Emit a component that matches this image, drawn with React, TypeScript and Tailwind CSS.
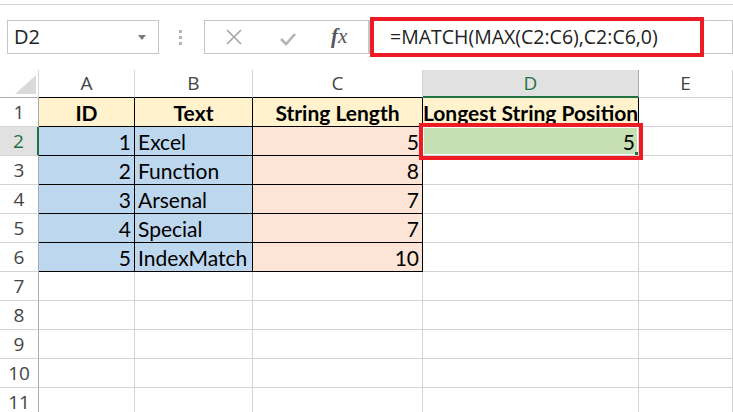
import React from 'react';

type Cell = {
    text?: string;
    align?: 'left' | 'right' | 'center';
    bold?: boolean;
    bg?: string;
    r?: 'black' | 'gray';
    b?: 'black' | 'gray';
};

const COLS = ['A', 'B', 'C', 'D', 'E'];

// rows 1..6 carry the table, the rest are empty sheet rows
const tableRows: Cell[][] = [
    [
        { text: 'ID', align: 'center', bold: true, bg: 'bg-[#fff2cc]', r: 'black', b: 'black' },
        { text: 'Text', align: 'center', bold: true, bg: 'bg-[#fff2cc]', r: 'black', b: 'black' },
        { text: 'String Length', align: 'center', bold: true, bg: 'bg-[#fff2cc]', r: 'black', b: 'black' },
        { text: 'Longest String Position', align: 'center', bold: true, bg: 'bg-[#fff2cc]', r: 'black', b: 'black' },
        {},
    ],
    [
        { text: '1', align: 'right', bg: 'bg-[#bdd7ee]', r: 'black', b: 'black' },
        { text: 'Excel', align: 'left', bg: 'bg-[#bdd7ee]', r: 'black', b: 'black' },
        { text: '5', align: 'right', bg: 'bg-[#fce4d6]', r: 'black', b: 'black' },
        { text: '5', align: 'right', bg: 'bg-[#c6e0b4]' },
        {},
    ],
    [
        { text: '2', align: 'right', bg: 'bg-[#bdd7ee]', r: 'black', b: 'black' },
        { text: 'Function', align: 'left', bg: 'bg-[#bdd7ee]', r: 'black', b: 'black' },
        { text: '8', align: 'right', bg: 'bg-[#fce4d6]', r: 'black', b: 'black' },
        {},
        {},
    ],
    [
        { text: '3', align: 'right', bg: 'bg-[#bdd7ee]', r: 'black', b: 'black' },
        { text: 'Arsenal', align: 'left', bg: 'bg-[#bdd7ee]', r: 'black', b: 'black' },
        { text: '7', align: 'right', bg: 'bg-[#fce4d6]', r: 'black', b: 'black' },
        {},
        {},
    ],
    [
        { text: '4', align: 'right', bg: 'bg-[#bdd7ee]', r: 'black', b: 'black' },
        { text: 'Special', align: 'left', bg: 'bg-[#bdd7ee]', r: 'black', b: 'black' },
        { text: '7', align: 'right', bg: 'bg-[#fce4d6]', r: 'black', b: 'black' },
        {},
        {},
    ],
    [
        { text: '5', align: 'right', bg: 'bg-[#bdd7ee]', r: 'black', b: 'black' },
        { text: 'IndexMatch', align: 'left', bg: 'bg-[#bdd7ee]', r: 'black', b: 'black' },
        { text: '10', align: 'right', bg: 'bg-[#fce4d6]', r: 'black', b: 'black' },
        {},
        {},
    ],
];

const emptyRow: Cell[] = [{}, {}, {}, {}, {}];
const rows: Cell[][] = [...tableRows, emptyRow, emptyRow, emptyRow, emptyRow, emptyRow];

const cellFont = "font-['Lato','Liberation_Sans',sans-serif]";
const uiFont = "font-['Open_Sans','Noto_Sans',sans-serif]";

function SheetCell({ cell, row, col }: { cell: Cell; row: number; col: number }) {
    const isActive = row === 2 && col === 3;
    const right = cell.r === 'black' ? 'border-r-black' : 'border-r-[#d4d4d4]';
    const bottom = cell.b === 'black' ? 'border-b-black' : 'border-b-[#d4d4d4]';
    const align =
        cell.align === 'right' ? 'justify-end' : cell.align === 'center' ? 'justify-center' : 'justify-start';
    return (
        <div
            className={`relative flex h-[29px] items-center border-r border-b px-[3px] text-[21px] leading-none text-black ${right} ${bottom} ${cell.bg ?? 'bg-white'} ${align} ${cell.bold ? 'font-bold' : ''} ${cellFont}`}
        >
            {isActive && <div className="pointer-events-none absolute inset-0 border border-white" />}
            <span className="whitespace-nowrap">{cell.text}</span>
            {isActive && (
                <>
                    <div className="absolute right-0 bottom-0 h-[3px] w-[3px] bg-[#217346]" />
                    <div className="pointer-events-none absolute -top-[4px] -right-[5px] -bottom-[5px] -left-[4px] z-10 border-[4px] border-[#ed1c24]" />
                </>
            )}
        </div>
    );
}

export default function App() {
    return (
        <div className={`relative h-[412px] w-[733px] overflow-hidden bg-white ${uiFont}`}>
            {/* strip cut off at the top */}
            <div className="h-[5px] border-b border-[#d4d4d4]" />

            {/* formula bar */}
            <div className="flex h-[65px] items-start pt-[15px]">
                <div className="ml-[7px] flex h-[34px] w-[152px] items-center justify-between border border-[#c6c6c6] pr-[12px] pl-[6px]">
                    <span className="text-[20px] text-[#222]">D2</span>
                    <svg width="8" height="5" viewBox="0 0 8 5">
                        <path d="M0 0 L8 0 L4 5 Z" fill="#7a7a7a" />
                    </svg>
                </div>
                <div className="ml-[20px] flex h-[34px] flex-col justify-center gap-[3px]">
                    <div className="h-[3px] w-[3px] bg-[#b4b4b4]" />
                    <div className="h-[3px] w-[3px] bg-[#b4b4b4]" />
                    <div className="h-[3px] w-[3px] bg-[#b4b4b4]" />
                </div>
                <div className="ml-[22px] flex h-[34px] w-[165px] items-center border border-[#c6c6c6]">
                    <svg className="ml-[21px]" width="16" height="16" viewBox="0 0 16 16">
                        <path d="M1 1 L15 15 M15 1 L1 15" stroke="#a6a6a6" strokeWidth="1.6" fill="none" />
                    </svg>
                    <svg className="ml-[38px] mt-[3px]" width="16" height="14" viewBox="0 0 16 14">
                        <path d="M1 7 L6 12 L15 2" stroke="#b4b4b4" strokeWidth="2.6" fill="none" />
                    </svg>
                    <span className="ml-[35px] font-['Liberation_Serif',serif] text-[21px] italic text-[#555]">
                        <span className="font-bold">f</span>x
                    </span>
                </div>
                <div className="relative h-[34px] flex-1 border border-[#c6c6c6]">
                    <div className="absolute -top-[4px] -bottom-[4px] left-0 w-[334px] border-[4px] border-[#ed1c24]" />
                    <div className="flex h-full items-center pl-[20px] text-[19.5px] whitespace-nowrap text-[#222]">
                        =MATCH(MAX(C2:C6),C2:C6,0)
                    </div>
                </div>
            </div>

            {/* sheet */}
            <div className="grid grid-cols-[39px_96px_118px_170px_216px_1fr]">
                {/* column header row */}
                <div className="relative h-[28px] border-r border-b border-r-[#d4d4d4] border-b-[#ababab] bg-white">
                    <svg className="absolute top-[5px] left-[15px]" width="21" height="19" viewBox="0 0 21 19">
                        <path d="M21 0 L21 19 L0 19 Z" fill="#dadada" />
                    </svg>
                </div>
                {COLS.map((c, i) =>
                    c === 'D' ? (
                        <div
                            key={c}
                            className="flex h-[28px] items-center justify-center border-r border-b-[2px] border-r-[#ababab] border-b-[#217346] bg-[#e1e1e1] text-[19px] text-[#217346]"
                        >
                            {c}
                        </div>
                    ) : (
                        <div
                            key={c}
                            className={`flex h-[28px] items-center justify-center border-r border-b border-r-[#d4d4d4] bg-white text-[19px] text-[#444] ${i < 3 ? 'border-b-black' : 'border-b-[#d4d4d4]'}`}
                        >
                            {c}
                        </div>
                    ),
                )}

                {rows.map((row, ri) => {
                    const n = ri + 1;
                    return (
                        <React.Fragment key={n}>
                            {n === 2 ? (
                                <div className="flex h-[29px] items-center justify-center border-r-[2px] border-b border-r-[#217346] border-b-[#d4d4d4] bg-[#e1e1e1] text-[19px] text-[#217346]">
                                    {n}
                                </div>
                            ) : (
                                <div className="flex h-[29px] items-center justify-center border-r border-b border-r-[#ababab] border-b-[#d4d4d4] bg-white text-[19px] text-[#444]">
                                    {n}
                                </div>
                            )}
                            {row.map((cell, ci) => (
                                <SheetCell key={ci} cell={cell} row={n} col={ci} />
                            ))}
                        </React.Fragment>
                    );
                })}
            </div>
        </div>
    );
}
